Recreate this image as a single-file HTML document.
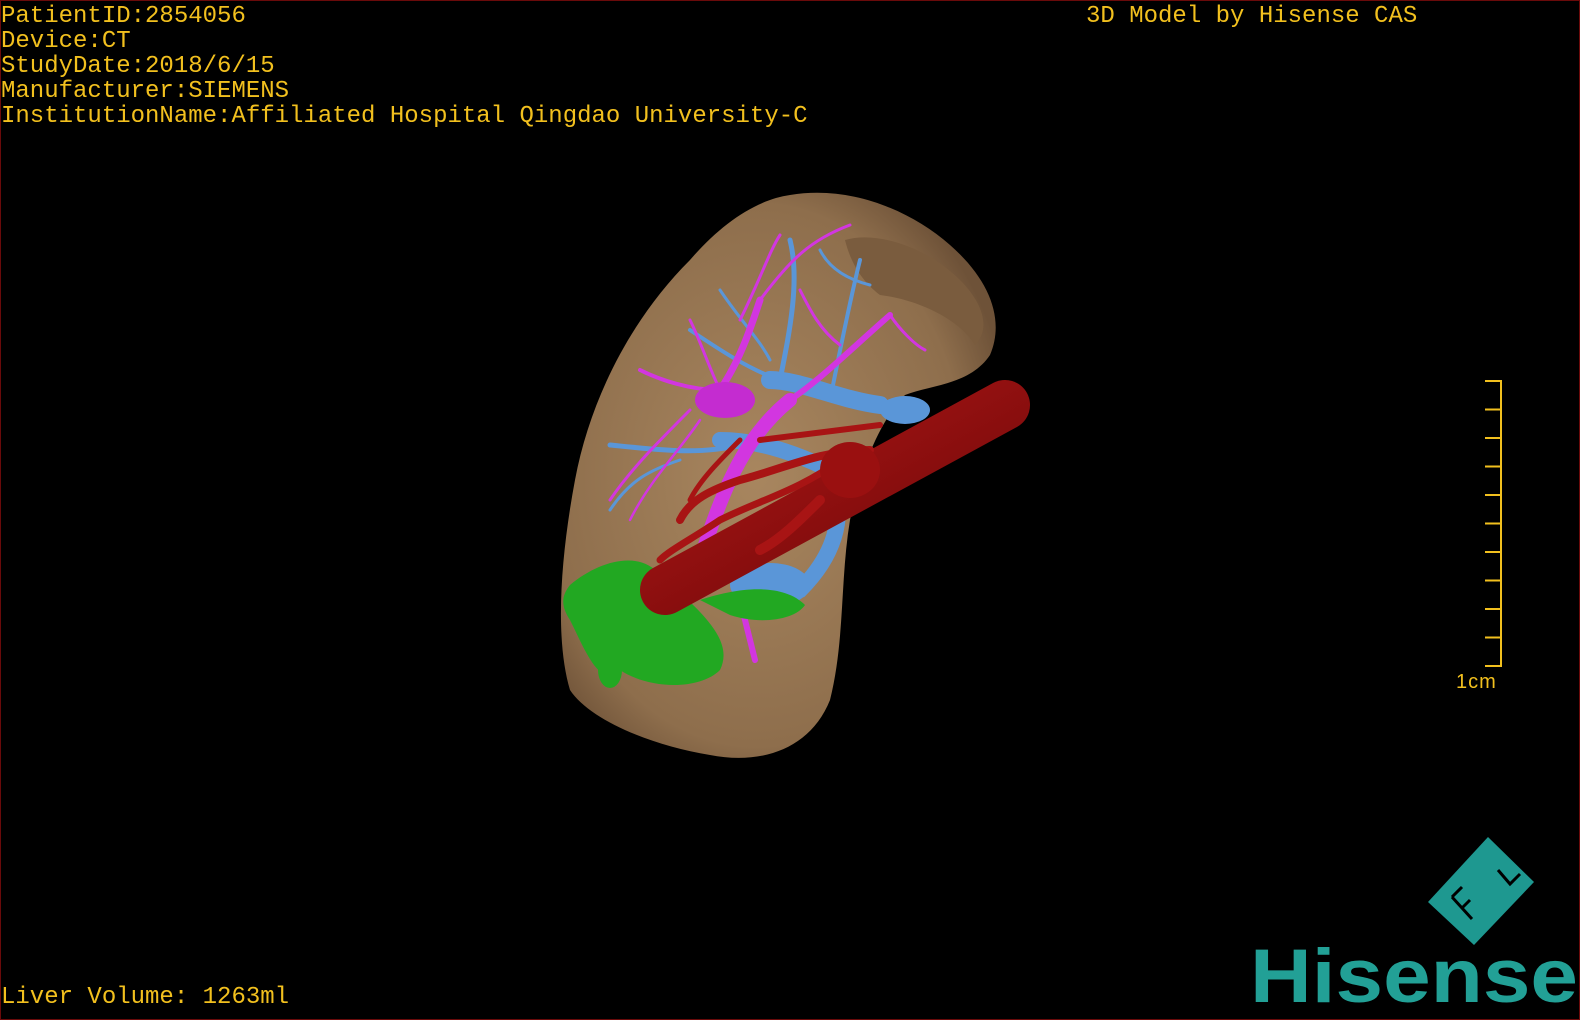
<!DOCTYPE html>
<html><head><meta charset="utf-8"><style>
html,body{margin:0;padding:0;background:#000;}
body{width:1580px;height:1020px;position:relative;overflow:hidden;}
#frame{position:absolute;left:0;top:0;width:1578px;height:1018px;border:1px solid #6a0a0a;}
.t{position:absolute;color:#f2c01e;font-family:"Liberation Mono","DejaVu Sans Mono",monospace;font-size:24px;line-height:25px;white-space:pre;letter-spacing:0px;}
</style></head><body>
<div id="frame"></div>
<div class="t" style="left:1px;top:4px">PatientID:2854056
Device:CT
StudyDate:2018/6/15
Manufacturer:SIEMENS
InstitutionName:Affiliated Hospital Qingdao University-C</div>
<div class="t" style="left:1086px;top:4px">3D Model by Hisense CAS</div>
<div class="t" style="left:1px;top:985px">Liver Volume: 1263ml</div>
<svg width="1580" height="1020" style="position:absolute;left:0;top:0">
<defs>
<radialGradient id="lv" cx="0.45" cy="0.5" r="0.6">
<stop offset="0" stop-color="#a8865f"/><stop offset="0.8" stop-color="#8e6e4c"/><stop offset="1" stop-color="#6e5238"/>
</radialGradient>
<linearGradient id="ivc" x1="0" y1="0" x2="1" y2="1"><stop offset="0" stop-color="#b01818"/><stop offset="1" stop-color="#6a0606"/></linearGradient>
</defs>
<path d="M790,195 C850,185 910,210 950,245 C990,280 1005,320 990,355 C970,385 930,385 905,395 C880,420 860,470 850,520 C840,580 845,640 830,700 C810,750 760,765 710,755 C650,745 590,720 570,690 C555,640 560,560 575,480 C590,400 630,320 690,260 C720,225 755,200 790,195 Z" fill="url(#lv)"/>
<path d="M845,240 C880,230 930,250 960,280 C985,305 990,330 975,345 C960,320 920,300 880,295 C860,280 850,260 845,240Z" fill="#7a5c3e"/>
<g stroke="#5a96d8" stroke-linecap="round" fill="none">
<path d="M770,380 C800,380 840,400 880,405" stroke-width="18"/>
<path d="M720,440 C760,440 800,455 830,470 C850,520 830,560 800,590 C780,600 750,605 735,600" stroke-width="16"/>
<path d="M610,445 C660,450 700,455 740,445" stroke-width="5"/>
<path d="M610,510 C630,480 650,470 680,460" stroke-width="3"/>
<path d="M790,240 C800,280 790,330 780,380" stroke-width="5"/>
<path d="M860,260 C850,300 840,350 830,400" stroke-width="4"/>
<path d="M690,330 C720,350 750,370 780,380" stroke-width="4"/>
<path d="M820,250 C830,270 850,280 870,285" stroke-width="3"/>
<path d="M720,290 C740,320 760,340 770,360" stroke-width="3"/>
</g>
<ellipse cx="905" cy="410" rx="25" ry="14" fill="#5a96d8"/>
<ellipse cx="770" cy="585" rx="40" ry="22" fill="#5a96d8"/>
<g stroke="#d236e0" stroke-linecap="round" fill="none">
<path d="M700,560 C720,500 740,440 790,400" stroke-width="14"/>
<path d="M720,390 C740,360 750,330 760,300" stroke-width="7"/>
<path d="M790,400 C820,380 850,350 890,315" stroke-width="6"/>
<path d="M720,390 C690,390 660,380 640,370" stroke-width="4"/>
<path d="M740,320 C760,280 770,250 780,235" stroke-width="3"/>
<path d="M760,300 C790,260 810,240 850,225" stroke-width="3"/>
<path d="M800,290 C810,310 820,330 840,345" stroke-width="3"/>
<path d="M690,410 C660,440 630,470 610,500" stroke-width="3"/>
<path d="M700,420 C680,450 650,480 630,520" stroke-width="2.5"/>
<path d="M690,320 C700,340 710,370 720,390" stroke-width="3"/>
<path d="M740,600 C745,620 750,640 755,660" stroke-width="6"/>
<path d="M890,315 C900,330 915,345 925,350" stroke-width="3"/>
</g>
<ellipse cx="725" cy="400" rx="30" ry="18" fill="#c42cd0"/>
<path d="M570,585 C600,560 640,550 660,575 C700,610 735,640 720,670 C700,690 650,690 620,670 C600,690 585,650 570,620 C560,605 562,595 570,585Z" fill="#22a822"/>
<path d="M700,600 C730,590 780,580 805,605 C795,620 760,625 730,615Z" fill="#22a822"/>
<ellipse cx="610" cy="670" rx="12" ry="18" fill="#22a822"/>
<path d="M665,590 L1005,405" stroke="url(#ivc)" stroke-width="50" stroke-linecap="round"/>
<g stroke="#a81414" stroke-linecap="round" fill="none">
<path d="M870,450 C820,450 780,470 740,480 C710,490 690,500 680,520" stroke-width="8"/>
<path d="M840,460 C800,490 760,500 720,520 C690,540 670,550 660,560" stroke-width="7"/>
<path d="M880,425 C840,430 800,435 760,440" stroke-width="6"/>
<path d="M740,440 C720,460 700,480 690,500" stroke-width="5"/>
<path d="M820,500 C800,520 780,540 760,550" stroke-width="10"/>
</g>
<ellipse cx="850" cy="470" rx="30" ry="28" fill="#9a1010"/>
</svg>
<svg width="1580" height="1020" style="position:absolute;left:0;top:0">
<g stroke="#f2c01e" stroke-width="2">
<line x1="1501" y1="381" x2="1501" y2="667"/>
<line x1="1485" y1="381" x2="1502" y2="381"/>
<line x1="1485" y1="409.5" x2="1501" y2="409.5"/>
<line x1="1485" y1="438" x2="1501" y2="438"/>
<line x1="1485" y1="466.5" x2="1501" y2="466.5"/>
<line x1="1485" y1="495" x2="1501" y2="495"/>
<line x1="1485" y1="523.5" x2="1501" y2="523.5"/>
<line x1="1485" y1="552" x2="1501" y2="552"/>
<line x1="1485" y1="580.5" x2="1501" y2="580.5"/>
<line x1="1485" y1="609" x2="1501" y2="609"/>
<line x1="1485" y1="637.5" x2="1501" y2="637.5"/>
<line x1="1485" y1="666" x2="1502" y2="666"/>
</g>
<text x="1456" y="688" fill="#f2c01e" font-family="Liberation Sans, sans-serif" font-size="20" letter-spacing="1">1cm</text>
<polygon points="1488,837 1534,882 1474,945 1428,902" fill="#1e9890"/>
<g fill="none" stroke="#000" stroke-width="3">
<path d="M1452,897 L1472,919 M1452,897 L1462,887 M1462,908 L1470,900"/>
<path d="M1498,870 L1510,884 L1520,874"/>
</g>
<text x="1250" y="1002" fill="#22a096" font-family="Liberation Sans, sans-serif" font-size="76" font-weight="bold" textLength="328" lengthAdjust="spacingAndGlyphs">Hisense</text>
</svg>
</body></html>
